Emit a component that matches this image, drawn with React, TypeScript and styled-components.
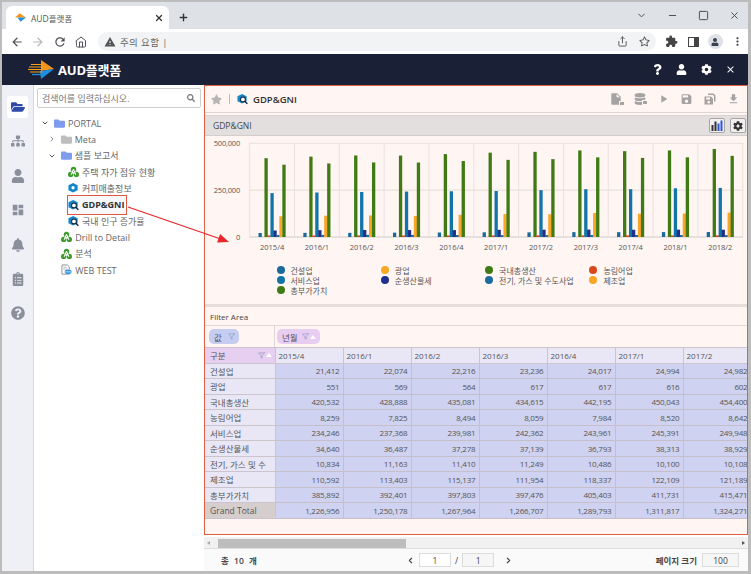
import React from "react";
import styled, { createGlobalStyle } from "styled-components";
import {
  FaCog,
  FaDatabase,
  FaQuestion,
  FaQuestionCircle,
  FaSearch,
  FaSitemap,
  FaStar,
  FaRegStar,
  FaUser,
  FaBell,
  FaClipboardList,
  FaFolder,
  FaFolderOpen
} from "react-icons/fa";
import {
  MdArrowBack,
  MdArrowForward,
  MdClose,
  MdDashboard,
  MdExtension,
  MdFileDownload,
  MdInsertDriveFile,
  MdMoreVert,
  MdPlayArrow,
  MdRefresh,
  MdSave,
  MdWarning
} from "react-icons/md";
import { FiChevronDown, FiChevronRight, FiChevronLeft, FiFilter, FiMinus, FiSquare, FiX, FiPlus, FiHome, FiShare } from "react-icons/fi";

const GlobalStyle = createGlobalStyle`
  html, body {
    margin: 0;
    padding: 0;
    background: #bcbcbc;
  }
  * {
    box-sizing: border-box;
  }
  body {
    font-family: "Open Sans", "Noto Sans CJK KR", sans-serif;
    color: #444;
  }
`;

const FONT = `"Open Sans", "Noto Sans CJK KR", sans-serif`;

const Screen = styled.div`
  width: 751px;
  height: 574px;
  overflow: hidden;
  display: flex;
  flex-direction: column;
  padding: 2px 3px 3px 2px;
  background: #bcbcbc;
`;

/* browser chrome */
const TabStrip = styled.div`
  height: 27px;
  flex: none;
  display: flex;
  align-items: flex-end;
  padding-left: 4px;
  background: #dee1e6;
  color: #3c4043;
`;

const Tab = styled.div`
  width: 163px;
  height: 23px;
  display: flex;
  align-items: center;
  padding: 0 5px 0 9px;
  gap: 5px;
  background: #fff;
  border-radius: 6px 6px 0 0;
  font-size: 8.5px;
  color: #555;
`;

const TabTitle = styled.span`
  flex: 1;
`;

const NewTab = styled.div`
  width: 28px;
  height: 23px;
  display: flex;
  align-items: center;
  justify-content: center;
  font-size: 14px;
  color: #333;
`;

const WindowButtons = styled.div`
  margin-left: auto;
  margin-right: -2px;
  height: 23px;
  align-self: flex-start;
  display: flex;
  align-items: center;
  padding-top: 3px;
  color: #444;
`;

const WindowButton = styled.div`
  width: 31px;
  display: flex;
  justify-content: center;
  font-size: 11px;
`;

const NavBar = styled.div`
  height: 25px;
  flex: none;
  display: flex;
  align-items: center;
  padding-left: 4px;
  background: #fff;
  color: #555;
`;

const NavButton = styled.div<{ $dim?: boolean }>`
  width: 21.5px;
  display: flex;
  justify-content: center;
  font-size: 14px;
  color: ${({ $dim }) => ($dim ? "#b6b8bb" : "#50535a")};
`;

const Omnibox = styled.div`
  width: 559px;
  height: 19px;
  margin-left: 6px;
  display: flex;
  align-items: center;
  gap: 4px;
  padding: 0 6px 0 6px;
  background: #f1f3f4;
  border-radius: 10px;
  font-size: 9.5px;
  color: #666;
  letter-spacing: 0.4px;
`;

const OmniIcons = styled.div`
  margin-left: auto;
  display: flex;
  align-items: center;
  gap: 11px;
  font-size: 11px;
  color: #555;
`;

const NavTools = styled.div`
  display: flex;
  align-items: center;
  margin-left: 4px;
  color: #444;
`;

const NavTool = styled.div`
  width: 22px;
  display: flex;
  justify-content: center;
  font-size: 13px;
`;

const Avatar = styled.div`
  width: 15px;
  height: 15px;
  border-radius: 50%;
  display: flex;
  align-items: center;
  justify-content: center;
  background: #dfe1e8;
  color: #3a4150;
  font-size: 8px;
`;

const SidePanelGlyph = styled.div`
  width: 11px;
  height: 10px;
  border: 1.5px solid #444;
  border-right-width: 5px;
`;

/* application header */
const AppHeader = styled.div`
  height: 31px;
  flex: none;
  display: flex;
  align-items: center;
  padding-left: 26px;
  background: #1a2035;
  color: #fff;
`;

const Brand = styled.div`
  margin-left: 4px;
  font-size: 13px;
  font-weight: 700;
  letter-spacing: -0.2px;
`;

const HeaderIcons = styled.div`
  margin-left: auto;
  padding-right: 5px;
  display: flex;
  align-items: center;
`;

const HeaderIcon = styled.div`
  width: 24.5px;
  display: flex;
  justify-content: center;
  font-size: 11px;
`;

/* body */
const Body = styled.div`
  flex: 1;
  min-height: 0;
  display: flex;
  background: #fff;
  position: relative;
`;

const Rail = styled.nav`
  width: 32px;
  flex: none;
  display: flex;
  flex-direction: column;
  align-items: center;
  padding-top: 11px;
  gap: 12.4px;
  background: #eef0f6;
  border-right: 1px solid #d6d8e0;
  color: #8b8f9c;
`;

const RailItem = styled.div<{ $active?: boolean }>`
  width: 21px;
  height: 22px;
  display: flex;
  align-items: center;
  justify-content: center;
  font-size: 14px;
  border-radius: 3px;
  background: ${({ $active }) => ($active ? "#fff" : "transparent")};
  color: ${({ $active }) => ($active ? "#2f4aa8" : "#8b8f9c")};
`;

const TreePanel = styled.aside`
  width: 170px;
  flex: none;
  padding: 3px 3px 0;
  background: #fff;
`;

const SearchBox = styled.div`
  height: 20px;
  display: flex;
  align-items: center;
  justify-content: space-between;
  padding: 0 5px 0 4px;
  border: 1px solid #cfcfcf;
  border-radius: 2px;
  font-size: 9px;
  color: #777;
`;

const Tree = styled.ul`
  list-style: none;
  margin: 7px 0 0;
  padding: 0;
`;

const TreeRow = styled.li<{ $depth: number }>`
  height: 16.33px;
  display: flex;
  align-items: center;
  gap: 3px;
  padding-left: ${({ $depth }) => 4 + $depth * 6.75}px;
  font-size: 9px;
  color: #666;
  white-space: nowrap;
`;

const Caret = styled.span`
  width: 8px;
  flex: none;
  display: flex;
  justify-content: center;
  font-size: 8px;
  color: #555;
  margin-right: 2px;
`;

const NodeGlyph = styled.span<{ $color?: string }>`
  width: 11px;
  height: 11px;
  flex: none;
  display: flex;
  align-items: center;
  justify-content: center;
  font-size: 11px;
  color: ${({ $color }) => $color || "#555"};
`;

const Selected = styled.span`
  display: flex;
  align-items: center;
  gap: 3px;
  width: 60px;
  height: 20px;
  margin-left: -1px;
  border: 1px solid #e2583e;
  background: #f7f8fc;
  font-weight: 700;
  color: #333;
`;

/* report frame */
const Main = styled.main`
  flex: 1;
  min-width: 0;
  display: flex;
  flex-direction: column;
`;

const Frame = styled.section`
  height: 450px;
  flex: none;
  display: flex;
  flex-direction: column;
  border: 1px solid #e2603f;
  background: #fff5f2;
  overflow: hidden;
`;

const Toolbar = styled.div`
  height: 27px;
  flex: none;
  display: flex;
  align-items: center;
  padding: 0 7px 0 6px;
  border-bottom: 1px solid #ddd6d3;
`;

const StarButton = styled.span`
  font-size: 11px;
  color: #b9b5b5;
  display: flex;
`;

const Separator = styled.span`
  width: 1px;
  height: 10px;
  margin: 0 7px;
  background: #bbb;
`;

const ReportName = styled.span`
  margin-left: 5px;
  font-size: 9.5px;
  font-weight: 600;
  color: #333;
`;

const ToolIcons = styled.div`
  margin-left: auto;
  display: flex;
  align-items: center;
  gap: 10.5px;
  color: #a5a2a2;
  font-size: 13px;
`;

const ToolIcon = styled.span`
  width: 13px;
  display: flex;
  justify-content: center;
`;

const TitleBar = styled.div`
  height: 21px;
  flex: none;
  margin-top: 2px;
  display: flex;
  align-items: center;
  gap: 5px;
  padding: 0 1px 0 8px;
  background: #e3dfdf;
  border-top: 1px solid #d9d3d1;
  border-bottom: 1px solid #d3cdcb;
  font-size: 8.5px;
  color: #444;
`;

const TitleText = styled.span`
  margin-right: auto;
`;

const SquareButton = styled.span`
  width: 16px;
  height: 15px;
  display: flex;
  align-items: center;
  justify-content: center;
  background: #f1efef;
  border: 1px solid #aaa5a5;
  border-radius: 2px;
  font-size: 10px;
  color: #333;
`;

const ChartSection = styled.div`
  height: 171px;
  flex: none;
  padding-top: 1px;
  border-bottom: 3px solid #e7dedb;
`;

const ChartSvg = styled.svg`
  display: block;
  font-family: ${FONT};
`;

const Legend = styled.div`
  display: grid;
  grid-template-columns: repeat(4, 104.3px);
  grid-auto-rows: 10px;
  padding-left: 71.5px;
  font-size: 8px;
  color: #555;
`;

const LegendItem = styled.div`
  display: flex;
  align-items: center;
  gap: 6px;
  white-space: nowrap;
`;

const LegendDot = styled.span<{ $color: string }>`
  width: 8px;
  height: 8px;
  border-radius: 50%;
  background: ${({ $color }) => $color};
`;

const FilterArea = styled.div`
  height: 19px;
  flex: none;
  display: flex;
  align-items: center;
  padding-left: 5px;
  border-bottom: 1px solid #e0d8d5;
  font-size: 8px;
  color: #444;
`;

const PillRow = styled.div`
  height: 21px;
  flex: none;
  display: flex;
`;

const PillCell = styled.div<{ $wide?: boolean }>`
  width: ${({ $wide }) => ($wide ? "auto" : "70px")};
  flex: ${({ $wide }) => ($wide ? 1 : "none")};
  display: flex;
  align-items: center;
  padding-left: ${({ $wide }) => ($wide ? "2px" : "4px")};
  border-right: ${({ $wide }) => ($wide ? "none" : "1px solid #ddd5d3")};
`;

const Pill = styled.span<{ $color: string; $width: number }>`
  width: ${({ $width }) => $width}px;
  height: 15px;
  display: flex;
  align-items: center;
  gap: 3px;
  padding: 0 4px 0 5px;
  border-radius: 5px;
  background: ${({ $color }) => $color};
  font-size: 8.5px;
  color: #555;
`;

const FilterGlyph = styled.span`
  margin-left: auto;
  display: flex;
  gap: 1px;
  font-size: 7px;
  color: #8a93b8;
`;

const TriUp = styled.span`
  width: 0;
  height: 0;
  align-self: center;
  border-left: 3px solid transparent;
  border-right: 3px solid transparent;
  border-bottom: 4px solid #fff;
`;

const TableClip = styled.div`
  flex: none;
  width: 100%;
  overflow: hidden;
`;

const Pivot = styled.table`
  table-layout: fixed;
  border-collapse: collapse;
  width: 546px;
  font-size: 8.5px;
  color: #555;
`;

const Th = styled.th<{ $kind: "corner" | "col" | "row" | "total" }>`
  height: 15.5px;
  padding: 0 3px 0 ${({ $kind }) => ($kind === "col" ? 3 : 5)}px;
  font-weight: 400;
  font-size: ${({ $kind }) => ($kind === "col" ? 8 : 8.5)}px;
  text-align: left;
  white-space: nowrap;
  overflow: hidden;
  border: 1px solid #cbc4cc;
  border-left: none;
  background: ${({ $kind }) =>
    $kind === "corner" ? "#e6cff0" : $kind === "total" ? "#d5cecd" : "#e9e7f5"};
`;

const CornerInner = styled.div`
  display: flex;
  align-items: center;
`;

const Td = styled.td`
  height: 15.5px;
  padding: 0 3px 0 0;
  text-align: right;
  font-size: 8px;
  letter-spacing: -0.2px;
  white-space: nowrap;
  overflow: hidden;
  background: #cfd2f0;
  border: 1px solid #c6bfca;
  border-left: none;
`;

/* bottom */
const ScrollBar = styled.div`
  height: 12px;
  flex: none;
  margin-top: 2px;
  display: flex;
  align-items: center;
  background: #f1f1f1;
  border-bottom: 1px solid #ddd;
`;

const ScrollArrow = styled.span<{ $right?: boolean }>`
  width: 0;
  height: 0;
  margin: ${({ $right }) => ($right ? "0 3px 0 auto" : "0 8px 0 3px")};
  border-top: 2.5px solid transparent;
  border-bottom: 2.5px solid transparent;
  ${({ $right }) =>
    $right ? "border-left: 3px solid #555;" : "border-right: 3px solid #aaa;"}
`;

const ScrollThumb = styled.span`
  width: 188px;
  height: 9px;
  align-self: flex-end;
  background: #bdbdbd;
`;

const Pager = styled.div`
  flex: 1;
  display: flex;
  align-items: center;
  padding: 0 9px 0 17px;
  background: #fafafa;
  font-size: 8.5px;
  color: #444;
`;

const Total = styled.span`
  width: 185px;
  font-weight: 600;
  word-spacing: 3px;
`;

const PageControl = styled.div`
  display: flex;
  align-items: center;
  gap: 4px;
  color: #444;
`;

const PageInput = styled.span<{ $width: number; $muted?: boolean }>`
  width: ${({ $width }) => $width}px;
  height: 14px;
  display: flex;
  align-items: center;
  justify-content: center;
  background: ${({ $muted }) => ($muted ? "#f6f6f6" : "#fff")};
  border: 1px solid #dcdcdc;
  font-size: 8.5px;
  font-weight: 400;
  color: #444;
`;

const PageSize = styled.div`
  margin-left: auto;
  display: flex;
  align-items: center;
  gap: 5px;
  font-weight: 600;
`;

const NextArrow = styled.span`
  display: flex;
  margin-left: 6px;
`;

const ArrowOverlay = styled.svg`
  position: absolute;
  left: 0;
  top: 0;
  pointer-events: none;
`;

const BadgeBox = styled.span`
  position: absolute;
  right: -2px;
  bottom: 0;
  width: 6px;
  height: 5px;
  background: #a5a2a2;
  border: 1px solid #fff5f2;
`;

const BadgeHost = styled.span`
  position: relative;
  display: flex;
`;

/* drawings */
const Logo = () => (
  <svg width="26" height="20" viewBox="0 0 26 20">
    <path d="M13 0 L26 9 L13 11 Z" fill="#f7941d" />
    <path d="M12 11 L26 9 L13 19 Z" fill="#1f8ee0" />
    <path d="M3 4.5 H14 M1 7 H15 M0 9.5 H15 M2 12 H14" stroke="#f9a31a" strokeWidth="1.2" />
    <path d="M4 14.5 H13" stroke="#1f8ee0" strokeWidth="1.3" />
  </svg>
);

const TabLogo = () => (
  <svg width="11" height="9" viewBox="0 0 26 20">
    <path d="M11 0 L26 10 L0 10 Z" fill="#f7941d" />
    <path d="M6 10 H26 L13 20 Z" fill="#2590e0" />
  </svg>
);

const GreenNode = () => (
  <svg width="12" height="12" viewBox="0 0 12 12">
    <circle cx="6" cy="3.2" r="3" fill="#3f9a2e" />
    <circle cx="2.9" cy="8.6" r="2.9" fill="#3f9a2e" />
    <circle cx="9.1" cy="8.6" r="2.9" fill="#3f9a2e" />
    <path d="M6 3 L3.4 9 M6 3 L8.6 9 M4.4 7 H7.6" stroke="#fff" strokeWidth="1.1" fill="none" />
  </svg>
);

const HexNode = ({ lens }: { lens?: boolean }) => (
  <svg width="12" height="12" viewBox="0 0 12 12">
    <path d="M5.5 0.5 L10.5 3 V8.5 L5.5 11 L0.5 8.5 V3 Z" fill="#1386c9" />
    {lens ? (
      <>
        <circle cx="6.5" cy="6.5" r="2.6" fill="#fff" stroke="#14233a" strokeWidth="1.1" />
        <path d="M8.4 8.4 L11.3 11.3" stroke="#14233a" strokeWidth="1.5" />
      </>
    ) : (
      <circle cx="5.5" cy="5.7" r="1.8" fill="#fff" />
    )}
  </svg>
);

const WebNode = () => (
  <svg width="12" height="12" viewBox="0 0 12 12">
    <path d="M1 0.5 H7 L9 2.5 V10.5 H1 Z" fill="#fff" stroke="#8a8f96" />
    <path d="M2.5 3 H6 M2.5 5 H7" stroke="#9aa0a6" strokeWidth="0.8" />
    <ellipse cx="7.8" cy="8" rx="3.8" ry="2.6" fill="#3a9be0" />
    <path d="M4.5 8 H11" stroke="#fff" strokeWidth="0.6" />
  </svg>
);

const BarsGlyph = () => (
  <svg width="12" height="11" viewBox="0 0 12 11">
    <rect x="0.5" y="5" width="2" height="6" fill="#333" />
    <rect x="3.5" y="1.5" width="2" height="9.5" fill="#333" />
    <rect x="6.5" y="3.5" width="2" height="7.5" fill="#2f55e0" />
    <rect x="9.5" y="0.5" width="2" height="10.5" fill="#2f55e0" />
  </svg>
);

const SaveCopyGlyph = () => (
  <svg width="12" height="12" viewBox="0 0 12 12" fill="#a5a2a2">
    <path d="M4 0.5 H9.5 L11.5 2.5 V8.5 H10 V3.2 L8.8 2 H4 Z" />
    <path d="M0.5 3.5 H7 L9 5.5 V11.5 H0.5 Z M2.2 4.6 V6.6 H6 V4.6 Z M4.7 7.8 A1.3 1.3 0 1 0 4.71 7.8 Z" fillRule="evenodd" />
  </svg>
);

const LockedDoc = ({ db }: { db?: boolean }) => (
  <BadgeHost>
    {db ? <FaDatabase size={12} /> : <MdInsertDriveFile size={14} />}
    <BadgeBox />
  </BadgeHost>
);

/* data */
type Series = { name: string; color: string; values: number[] };

const SERIES: Series[] = [
  { name: "건설업", color: "#1b6a9c", values: [21412, 22074, 22216, 23236, 24017, 24994, 24982, 25900, 25800, 26100, 26400] },
  { name: "광업", color: "#f9a825", values: [551, 569, 564, 617, 617, 616, 602, 610, 620, 630, 640] },
  { name: "국내총생산", color: "#3f7a14", values: [420532, 428888, 435081, 434615, 442195, 450043, 454400, 462000, 458000, 462000, 470000] },
  { name: "농림어업", color: "#d9481c", values: [8259, 7825, 8494, 8059, 7984, 8520, 8642, 8700, 8500, 8300, 8600] },
  { name: "서비스업", color: "#1275a8", values: [234246, 237368, 239981, 242362, 243961, 245391, 249948, 255000, 255000, 260000, 262000] },
  { name: "순생산물세", color: "#1f2f8c", values: [34640, 36487, 37278, 37139, 36793, 38313, 38929, 39500, 38500, 39000, 38800] },
  { name: "전기, 가스 및 수도사업", color: "#1a6b9e", values: [10834, 11163, 11410, 11249, 10486, 10100, 10108, 10400, 10600, 10300, 10200] },
  { name: "제조업", color: "#f9a526", values: [110592, 113403, 115137, 111954, 118337, 122109, 121189, 128000, 124000, 125000, 130000] },
  { name: "총부가가치", color: "#3f7a14", values: [385892, 392401, 397803, 397476, 405403, 411731, 415471, 425000, 422000, 425000, 433000] }
];

const PERIODS = ["2015/4", "2016/1", "2016/2", "2016/3", "2016/4", "2017/1", "2017/2", "2017/3", "2017/4", "2018/1", "2018/2"];
const GRAND = [1226956, 1250178, 1267964, 1266707, 1289793, 1311817, 1324271];
const VISIBLE = 7;
const ROW_LABEL_CHARS = 10;

const PLOT_LEFT = 44.7;
const PLOT_TOP = 6.3;
const PLOT_H = 93.7;
const GROUP_W = 44.82;

const Chart = () => (
  <ChartSvg width={541} height={128} viewBox="0 0 541 128">
    <rect x={PLOT_LEFT} y={PLOT_TOP} width={GROUP_W * 11} height={PLOT_H} fill="none" stroke="#e9e1de" />
    <line x1={PLOT_LEFT} x2={PLOT_LEFT + GROUP_W * 11} y1={PLOT_TOP + PLOT_H / 2} y2={PLOT_TOP + PLOT_H / 2} stroke="#e4dcd8" />
    <line x1={PLOT_LEFT} x2={PLOT_LEFT + GROUP_W * 11} y1={PLOT_TOP + PLOT_H} y2={PLOT_TOP + PLOT_H} stroke="#d9d4d4" />
    {["500,000", "250,000", "0"].map((t, i) => (
      <text key={t} x={35} y={PLOT_TOP + (PLOT_H / 2) * i + 3} textAnchor="end" fontSize="7.5" letterSpacing="-0.2" fill="#555">
        {t}
      </text>
    ))}
    {PERIODS.map((p, g) => {
      const left = PLOT_LEFT + GROUP_W * g;
      return (
        <g key={p}>
          {g > 0 && <line x1={left} x2={left} y1={PLOT_TOP} y2={PLOT_TOP + PLOT_H} stroke="#e9e1de" />}
          <text x={left + GROUP_W / 2} y={113} textAnchor="middle" fontSize="7.5" fill="#555">
            {p}
          </text>
          {SERIES.map((s, i) => {
            const h = (s.values[g] / 500000) * PLOT_H;
            return (
              <rect
                key={s.name}
                x={left + 8.8 + i * 2.98}
                y={PLOT_TOP + PLOT_H - h}
                width={3.3}
                height={h}
                fill={s.color}
              />
            );
          })}
        </g>
      );
    })}
  </ChartSvg>
);

const fmt = (n: number) => n.toLocaleString("en-US");

export default function App() {
  return (
    <>
      <GlobalStyle />
      <Screen>
        <TabStrip>
          <Tab>
            <TabLogo />
            <TabTitle>AUD플랫폼</TabTitle>
            <FiX size={10} color="#333" strokeWidth={3} />
          </Tab>
          <NewTab>
            <FiPlus strokeWidth={3} size={11} />
          </NewTab>
          <WindowButtons>
            <WindowButton><FiChevronDown /></WindowButton>
            <WindowButton><FiMinus /></WindowButton>
            <WindowButton><FiSquare /></WindowButton>
            <WindowButton><FiX /></WindowButton>
          </WindowButtons>
        </TabStrip>
        <NavBar>
          <NavButton><MdArrowBack /></NavButton>
          <NavButton $dim><MdArrowForward /></NavButton>
          <NavButton><MdRefresh /></NavButton>
          <NavButton><FiHome size={12} /></NavButton>
          <Omnibox>
            <MdWarning size={12} color="#555" />
            주의 요함 |
            <OmniIcons>
              <FiShare />
              <FaRegStar />
            </OmniIcons>
          </Omnibox>
          <NavTools>
            <NavTool><MdExtension /></NavTool>
            <NavTool><SidePanelGlyph /></NavTool>
            <NavTool><Avatar><FaUser /></Avatar></NavTool>
            <NavTool><MdMoreVert /></NavTool>
          </NavTools>
        </NavBar>
        <AppHeader>
          <Logo />
          <Brand>AUD플랫폼</Brand>
          <HeaderIcons>
            <HeaderIcon><FaQuestion /></HeaderIcon>
            <HeaderIcon><FaUser /></HeaderIcon>
            <HeaderIcon><FaCog /></HeaderIcon>
            <HeaderIcon><MdClose /></HeaderIcon>
          </HeaderIcons>
        </AppHeader>
        <Body>
          <Rail>
            <RailItem $active><FaFolderOpen /></RailItem>
            <RailItem><FaSitemap /></RailItem>
            <RailItem><FaUser /></RailItem>
            <RailItem><MdDashboard /></RailItem>
            <RailItem><FaBell /></RailItem>
            <RailItem><FaClipboardList /></RailItem>
            <RailItem><FaQuestionCircle /></RailItem>
          </Rail>
          <TreePanel>
            <SearchBox>
              검색어를 입력하십시오.
              <FaSearch size={8} color="#777" />
            </SearchBox>
            <Tree>
              <TreeRow $depth={0}>
                <Caret><FiChevronDown strokeWidth={3} /></Caret>
                <NodeGlyph $color="#7f9bf0"><FaFolder /></NodeGlyph>
                PORTAL
              </TreeRow>
              <TreeRow $depth={1}>
                <Caret><FiChevronRight /></Caret>
                <NodeGlyph $color="#bdbdbd"><FaFolder /></NodeGlyph>
                Meta
              </TreeRow>
              <TreeRow $depth={1}>
                <Caret><FiChevronDown strokeWidth={3} /></Caret>
                <NodeGlyph $color="#7f9bf0"><FaFolder /></NodeGlyph>
                샘플 보고서
              </TreeRow>
              <TreeRow $depth={4}>
                <NodeGlyph><GreenNode /></NodeGlyph>
                주택 자가 점유 현황
              </TreeRow>
              <TreeRow $depth={4}>
                <NodeGlyph><HexNode /></NodeGlyph>
                커피매출정보
              </TreeRow>
              <TreeRow $depth={4}>
                <Selected>
                  <NodeGlyph><HexNode lens /></NodeGlyph>
                  GDP&amp;GNI
                </Selected>
              </TreeRow>
              <TreeRow $depth={4}>
                <NodeGlyph><HexNode lens /></NodeGlyph>
                국내 인구 증가율
              </TreeRow>
              <TreeRow $depth={3}>
                <NodeGlyph><GreenNode /></NodeGlyph>
                Drill to Detail
              </TreeRow>
              <TreeRow $depth={3}>
                <NodeGlyph><GreenNode /></NodeGlyph>
                분석
              </TreeRow>
              <TreeRow $depth={3}>
                <NodeGlyph><WebNode /></NodeGlyph>
                WEB TEST
              </TreeRow>
            </Tree>
          </TreePanel>
          <Main>
            <Frame>
              <Toolbar>
                <StarButton><FaStar /></StarButton>
                <Separator />
                <NodeGlyph><HexNode lens /></NodeGlyph>
                <ReportName>GDP&amp;GNI</ReportName>
                <ToolIcons>
                  <ToolIcon><LockedDoc /></ToolIcon>
                  <ToolIcon><LockedDoc db /></ToolIcon>
                  <ToolIcon><MdPlayArrow size={20} /></ToolIcon>
                  <ToolIcon><MdSave size={16} /></ToolIcon>
                  <ToolIcon><SaveCopyGlyph /></ToolIcon>
                  <ToolIcon><MdFileDownload size={18} /></ToolIcon>
                </ToolIcons>
              </Toolbar>
              <TitleBar>
                <TitleText>GDP&amp;GNI</TitleText>
                <SquareButton><BarsGlyph /></SquareButton>
                <SquareButton><FaCog /></SquareButton>
              </TitleBar>
              <ChartSection>
                <Chart />
                <Legend>
                  {SERIES.map((s) => (
                    <LegendItem key={s.name}>
                      <LegendDot $color={s.color} />
                      {s.name}
                    </LegendItem>
                  ))}
                </Legend>
              </ChartSection>
              <FilterArea>Filter Area</FilterArea>
              <PillRow>
                <PillCell>
                  <Pill $color="#c5cdf3" $width={30}>
                    값
                    <FilterGlyph><FiFilter /></FilterGlyph>
                  </Pill>
                </PillCell>
                <PillCell $wide>
                  <Pill $color="#e8cdf2" $width={43}>
                    년월
                    <FilterGlyph><FiFilter /><TriUp /></FilterGlyph>
                  </Pill>
                </PillCell>
              </PillRow>
              <TableClip>
                <Pivot>
                  <colgroup>
                    <col style={{ width: 70 }} />
                    {PERIODS.slice(0, VISIBLE).map((p) => (
                      <col key={p} style={{ width: 68 }} />
                    ))}
                  </colgroup>
                  <thead>
                    <tr>
                      <Th $kind="corner">
                        <CornerInner>
                          구분
                          <FilterGlyph><FiFilter /><TriUp /></FilterGlyph>
                        </CornerInner>
                      </Th>
                      {PERIODS.slice(0, VISIBLE).map((p) => (
                        <Th key={p} $kind="col">{p}</Th>
                      ))}
                    </tr>
                  </thead>
                  <tbody>
                    {SERIES.map((s) => (
                      <tr key={s.name}>
                        <Th $kind="row">{s.name.slice(0, ROW_LABEL_CHARS)}</Th>
                        {s.values.slice(0, VISIBLE).map((v, i) => (
                          <Td key={i}>{fmt(v)}</Td>
                        ))}
                      </tr>
                    ))}
                    <tr>
                      <Th $kind="total">Grand Total</Th>
                      {GRAND.map((v, i) => (
                        <Td key={i}>{fmt(v)}</Td>
                      ))}
                    </tr>
                  </tbody>
                </Pivot>
              </TableClip>
            </Frame>
            <ScrollBar>
              <ScrollArrow />
              <ScrollThumb />
              <ScrollArrow $right />
            </ScrollBar>
            <Pager>
              <Total>총 10 개</Total>
              <PageControl>
                <FiChevronLeft size={9} strokeWidth={3} />
                <PageInput $width={32}>1</PageInput>
                /
                <PageInput $width={32} $muted>1</PageInput>
                <NextArrow><FiChevronRight size={9} strokeWidth={3} /></NextArrow>
              </PageControl>
              <PageSize>
                페이지 크기
                <PageInput $width={37} $muted>100</PageInput>
              </PageSize>
            </Pager>
          </Main>
          <ArrowOverlay width={746} height={488} viewBox="0 0 746 488">
            <path d="M126 122 L218 153.8" stroke="#e8262c" strokeWidth="1.2" />
            <path d="M227 157 L215.1 157.6 L218.1 149.1 Z" fill="#e8262c" />
          </ArrowOverlay>
        </Body>
      </Screen>
    </>
  );
}
